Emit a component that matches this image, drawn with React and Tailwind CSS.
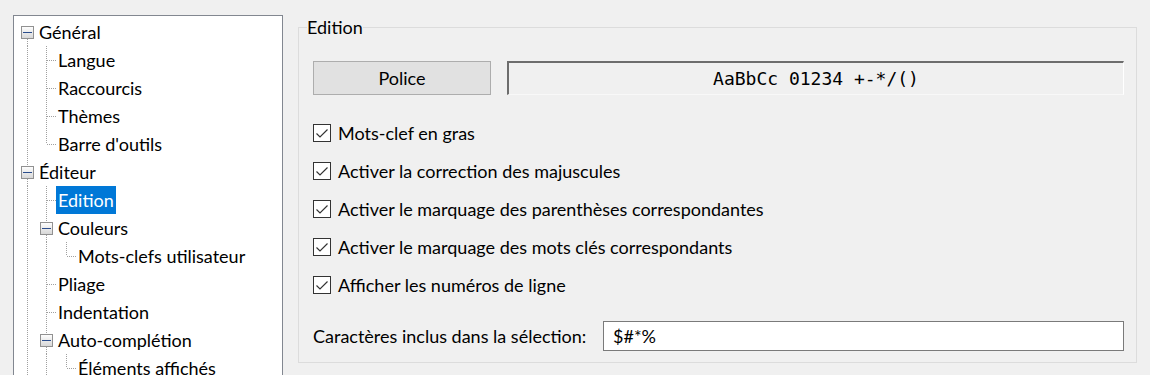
import React from "react";

const DOT = "#a0a0a0";

function Guide({ width, lines = [], ticks = [], box = null }) {
  return (
    <svg width={width} height={28} className="shrink-0" aria-hidden="true">
      <defs>
        <linearGradient id="tbox" x1="0" y1="0" x2="0" y2="1">
          <stop offset="0" stopColor="#ffffff" />
          <stop offset="1" stopColor="#d6d6d6" />
        </linearGradient>
      </defs>
      {lines.map(([x, y1, y2], i) => (
        <line key={"l" + i} x1={x + 0.5} x2={x + 0.5} y1={y1} y2={y2} stroke={DOT} strokeWidth="1" strokeDasharray="1 1" />
      ))}
      {ticks.map(([x1, x2], i) => (
        <line key={"t" + i} x1={x1} x2={x2} y1={14.5} y2={14.5} stroke={DOT} strokeWidth="1" strokeDasharray="1 1" />
      ))}
      {box !== null && (
        <g>
          <rect x={box - 5.5} y={8.5} width={12} height={12} fill="url(#tbox)" stroke="#919191" strokeWidth="1" />
          <line x1={box - 4} x2={box + 5} y1={14.5} y2={14.5} stroke="#2b4d8c" strokeWidth="1" />
        </g>
      )}
    </svg>
  );
}

const leaf1 = { width: 42, lines: [[13, 0, 28], [32, 0, 28]], ticks: [[33, 43]] };
const leaf1Last = { width: 42, lines: [[13, 0, 28], [32, 0, 14]], ticks: [[33, 43]] };
const parent1 = { width: 42, lines: [[13, 0, 28], [32, 0, 8], [32, 21, 28]], box: 32 };
const leaf2Last = { width: 62, lines: [[13, 0, 28], [32, 0, 28], [52, 0, 14]], ticks: [[53, 63]] };

const rows = [
  { text: "Général", g: { width: 23, lines: [[13, 21, 28]], box: 13 } },
  { text: "Langue", g: leaf1 },
  { text: "Raccourcis", g: leaf1 },
  { text: "Thèmes", g: leaf1 },
  { text: "Barre d'outils", g: leaf1Last },
  { text: "Éditeur", g: { width: 23, lines: [[13, 0, 8], [13, 21, 28]], box: 13 } },
  { text: "Edition", g: leaf1, selected: true },
  { text: "Couleurs", g: parent1 },
  { text: "Mots-clefs utilisateur", g: leaf2Last },
  { text: "Pliage", g: leaf1 },
  { text: "Indentation", g: leaf1 },
  { text: "Auto-complétion", g: parent1 },
  { text: "Éléments affichés", g: leaf2Last },
];

const checks = [
  "Mots-clef en gras",
  "Activer la correction des majuscules",
  "Activer le marquage des parenthèses correspondantes",
  "Activer le marquage des mots clés correspondants",
  "Afficher les numéros de ligne",
];

function CheckBox() {
  return (
    <div className="w-[18px] h-[18px] shrink-0 border border-[#333333] bg-white flex items-center justify-center">
      <svg width="16" height="16" viewBox="0 0 16 16" aria-hidden="true">
        <path d="M2.5 8.5 L6 12 L13.5 4.5" fill="none" stroke="#333333" strokeWidth="1.2" />
      </svg>
    </div>
  );
}

export default function App() {
  return (
    <div
      className="w-[1150px] h-[375px] overflow-hidden bg-[#f0f0f0] flex text-[18px] text-black"
      style={{ fontFamily: "Lato, 'Noto Sans', sans-serif" }}
    >
      <div className="pl-[13px] pt-[15px] shrink-0">
        <div className="w-[270px] h-[420px] border border-[#828790] bg-white pt-[2px]">
          {rows.map((r) => (
            <div key={r.text} className="flex h-[28px] items-center">
              <Guide {...r.g} />
              <span
                className={
                  "h-[28px] leading-[28px] px-[2px] whitespace-nowrap " +
                  (r.selected ? "bg-[#0078d7] text-white" : "")
                }
              >
                {r.text}
              </span>
            </div>
          ))}
        </div>
      </div>

      <div className="flex-1 ml-[15px] mr-[13px] pt-[16px]">
        <fieldset className="border border-[#dcdcdc] m-0 p-0 pl-[14px] pr-[12px] pb-[11px]">
          <legend className="ml-[-6px] p-0 leading-[22px]">Edition</legend>
          <div className="flex gap-[16px] mt-[23px]">
            <div className="w-[178px] h-[34px] shrink-0 bg-[#e1e1e1] border border-[#adadad] flex items-center justify-center">
              Police
            </div>
            <div className="flex-1 h-[34px] border-t-2 border-l-2 border-r border-b border-t-[#6d6d6d] border-l-[#6d6d6d] border-r-white border-b-[#f8f8f8] flex items-center justify-center">
              <span
                className="whitespace-pre text-[18px]"
                style={{ fontFamily: "'DejaVu Sans Mono', monospace" }}
              >
                AaBbCc 01234 +-*/()
              </span>
            </div>
          </div>

          <div className="mt-[19px] flex flex-col">
            {checks.map((c) => (
              <div key={c} className="h-[38px] flex items-center gap-[7px]">
                <CheckBox />
                <span className="whitespace-nowrap">{c}</span>
              </div>
            ))}
          </div>

          <div className="mt-[17px] flex items-center">
            <span className="w-[290px] shrink-0 whitespace-nowrap">Caractères inclus dans la sélection:</span>
            <div className="flex-1 h-[30px] border border-[#7a7a7a] bg-white flex items-center pl-[9px]">
              $#*%
            </div>
          </div>
        </fieldset>
      </div>
    </div>
  );
}
